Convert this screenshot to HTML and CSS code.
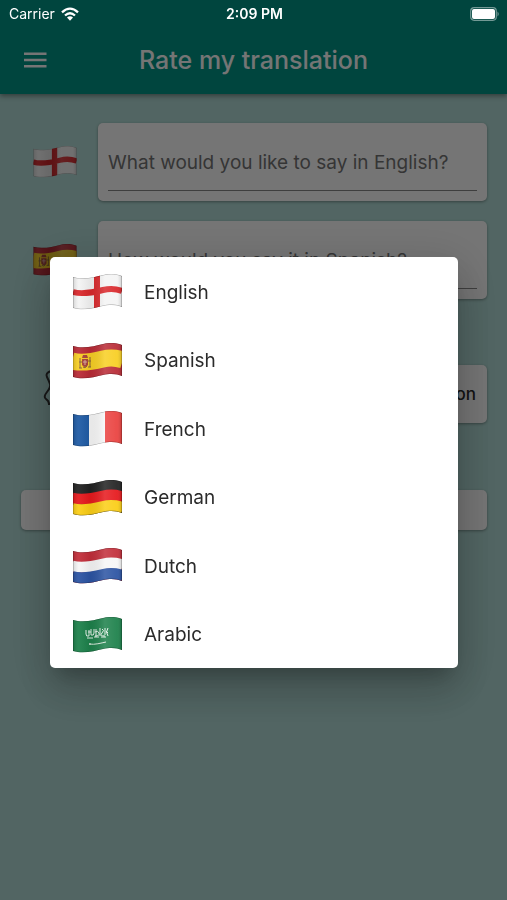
FILE: index.html
```html
<!DOCTYPE html>
<html lang="en">
<head>
    <meta charset="UTF-8">
    <meta name="viewport" content="width=device-width, initial-scale=1.0">
    <title>Rate my translation</title>
    <link rel="stylesheet" href="styles.css">
</head>
<body>
    <!-- Flags, shared by the form and the language dialog -->
    <svg class="defs" aria-hidden="true">
        <defs>
            <clipPath id="flagShape">
                <path d="M0 3c10 3 22 0 30-2s14-1 19 1v31c-5-2-11-3-19-1s-20 5-30 2z"/>
            </clipPath>
            <linearGradient id="flagShade">
                <stop offset="0" stop-color="#000" stop-opacity=".14"/>
                <stop offset=".12" stop-color="#fff" stop-opacity=".06"/>
                <stop offset=".35" stop-color="#000" stop-opacity=".06"/>
                <stop offset=".65" stop-color="#fff" stop-opacity=".14"/>
                <stop offset=".9" stop-color="#fff" stop-opacity=".06"/>
                <stop offset="1" stop-color="#000" stop-opacity=".18"/>
            </linearGradient>
            <g id="flagFinish">
                <path fill="url(#flagShade)" d="M0 0h49v36H0z"/>
                <path fill="none" stroke="#000" stroke-opacity=".3" d="M0 3c10 3 22 0 30-2s14-1 19 1v31c-5-2-11-3-19-1s-20 5-30 2z"/>
            </g>
            <symbol id="flag-en" viewBox="0 0 49 36">
                <g clip-path="url(#flagShape)" fill="none">
                    <path fill="#f4f4f4" d="M0 0h49v36H0z"/>
                    <path stroke="#d9282c" stroke-width="6" d="M0 18c10 3 22 0 30-2s14-1 19 1M24 0v36"/>
                    <use href="#flagFinish"/>
                </g>
            </symbol>
            <symbol id="flag-es" viewBox="0 0 49 36">
                <g clip-path="url(#flagShape)" fill="none">
                    <path fill="#b92b36" d="M0 0h49v36H0z"/>
                    <path stroke="#f8cf23" stroke-width="17" d="M-1 18c11 3 23 0 31-2s14-1 20 1"/>
                    <path fill="#a8443b" d="M9 16h6v6q-3 4-6 0zM10 12h4l1 3H9z"/>
                    <path stroke="#87613a" d="M7 15v10M17 14v10M6 25h3M15 24h3M6 19h3M15 18h3M10 24q2 2 4-1"/>
                    <path stroke="#d9a8a0" d="M12 17v5M10 19h4"/>
                    <use href="#flagFinish"/>
                </g>
            </symbol>
            <symbol id="flag-fr" viewBox="0 0 49 36">
                <g clip-path="url(#flagShape)">
                    <path fill="#f7f7f7" d="M0 0h49v36H0z"/>
                    <path fill="#1f5ba5" d="M0 0h16v36H0z"/>
                    <path fill="#ea4240" d="M32 0h17v36H32z"/>
                    <use href="#flagFinish"/>
                </g>
            </symbol>
            <symbol id="flag-de" viewBox="0 0 49 36">
                <g clip-path="url(#flagShape)" fill="none">
                    <path fill="#222" d="M0 0h49v36H0z"/>
                    <path stroke="#e6191d" stroke-width="11" d="M-1 18c11 3 23 0 31-2s14-1 20 1"/>
                    <path stroke="#fbce16" stroke-width="12" d="M-1 29c11 3 23 0 31-2s14-1 20 1"/>
                    <use href="#flagFinish"/>
                </g>
            </symbol>
            <symbol id="flag-nl" viewBox="0 0 49 36">
                <g clip-path="url(#flagShape)" fill="none">
                    <path fill="#c22e3a" d="M0 0h49v36H0z"/>
                    <path stroke="#f6f6f6" stroke-width="11" d="M-1 18c11 3 23 0 31-2s14-1 20 1"/>
                    <path stroke="#2c54a3" stroke-width="12" d="M-1 29c11 3 23 0 31-2s14-1 20 1"/>
                    <use href="#flagFinish"/>
                </g>
            </symbol>
            <symbol id="flag-sa" viewBox="0 0 49 36">
                <g clip-path="url(#flagShape)" fill="none">
                    <path fill="#1d814b" d="M0 0h49v36H0z"/>
                    <path stroke="#e4f1e8" stroke-width="1" d="M13 13v4q0 3 3 2v-6M14 21h6M18 12v6q3 1 3-2v-4M23 12v8M22 15q3-2 4 1t-4 3M27 11v8M29 12q3 1 0 4t3 3M32 11v7M35 11q-3 4 0 8M28 20h5M15 15h3M21 20h5M33 14l2 2"/>
                    <path stroke="#dcecdf" stroke-width="1" d="M16 27c6 1 12-1 17-2M17 26v2"/>
                    <use href="#flagFinish"/>
                </g>
            </symbol>
        </defs>
    </svg>

    <header class="app-bar">
        <button type="button" class="menu-button" aria-label="Menu">
            <svg viewBox="0 0 24 16" aria-hidden="true"><path d="M0 .5h22.5v2.4H0zM0 6.8h22.5v2.4H0zM0 13.1h22.5v2.4H0z"/></svg>
        </button>
        <h1>Rate my translation</h1>
    </header>

    <main class="page">
        <div class="row">
            <svg class="flag flag-small" aria-hidden="true"><use href="#flag-en"/></svg>
            <div class="card field">
                <input type="text" aria-label="English text" placeholder="What would you like to say in English?">
            </div>
        </div>
        <div class="row">
            <svg class="flag flag-small" aria-hidden="true"><use href="#flag-es"/></svg>
            <div class="card field">
                <input type="text" aria-label="Spanish text" placeholder="How would you say it in Spanish?">
            </div>
        </div>
        <div class="row actions">
            <svg class="scribble" viewBox="0 0 40 38" aria-hidden="true">
                <path d="M8 3q-6 2-4 6t3 7-3 8-1 7 3 5h8"/>
            </svg>
            <button type="button" class="card rate-button">Rate translation</button>
        </div>
        <div class="card result"></div>
    </main>

    <div class="backdrop">
        <div class="dialog" role="dialog" aria-modal="true" aria-label="Choose a language">
            <button type="button" class="option"><svg class="flag" aria-hidden="true"><use href="#flag-en"/></svg>English</button>
            <button type="button" class="option"><svg class="flag" aria-hidden="true"><use href="#flag-es"/></svg>Spanish</button>
            <button type="button" class="option"><svg class="flag" aria-hidden="true"><use href="#flag-fr"/></svg>French</button>
            <button type="button" class="option"><svg class="flag" aria-hidden="true"><use href="#flag-de"/></svg>German</button>
            <button type="button" class="option"><svg class="flag" aria-hidden="true"><use href="#flag-nl"/></svg>Dutch</button>
            <button type="button" class="option"><svg class="flag" aria-hidden="true"><use href="#flag-sa"/></svg>Arabic</button>
        </div>
    </div>

    <div class="status-bar">
        <span class="carrier">Carrier
            <svg class="wifi" viewBox="0 0 18 14" aria-hidden="true">
                <path fill="none" stroke="#fff" stroke-width="2.3" d="M1 5.3q8-7.4 16 0M4 8.5q5-4.4 10 0"/>
                <path fill="#fff" d="M6 10.5q3-2.4 6 0l-3 3.2z"/>
            </svg>
        </span>
        <span class="time">2:09 PM</span>
        <svg class="battery" viewBox="0 0 30 14" aria-hidden="true">
            <rect x=".7" y=".7" width="25.6" height="12.6" rx="3.5" fill="none" stroke="#fff" stroke-opacity=".45" stroke-width="1.2"/>
            <rect x="2" y="2" width="23" height="10" rx="2" fill="#fff"/>
            <path d="M27.5 4.5q2.5 2.5 0 5z" fill="#fff" fill-opacity=".45"/>
        </svg>
    </div>
</body>
</html>
```
FILE: styles.css
```css
* {
    box-sizing: border-box;
}

body {
    margin: 0;
    min-height: 100vh;
    background-color: #b2dcd7;
    font-family: Inter, "Liberation Sans", sans-serif;
    color: #2b2b2b;
}

button, input {
    font: inherit;
    color: inherit;
    border: none;
    background: none;
    padding: 0;
}

button {
    cursor: pointer;
}

.defs {
    position: absolute;
    width: 0;
    height: 0;
}

/* App bar */
.app-bar {
    display: grid;
    grid-template-columns: 48px 1fr 48px;
    align-items: center;
    height: 94px;
    padding: 26px 12px 0;
    background-color: #009688;
    color: #fff;
    box-shadow: 0 2px 5px rgba(0, 0, 0, 0.4);
}

.app-bar h1 {
    margin: 0;
    font-size: 25px;
    font-weight: 500;
    text-align: center;
}

.menu-button {
    display: flex;
    padding: 12px;
}

.menu-button svg {
    width: 24px;
    height: 16px;
    fill: #fff;
}

/* Form */
.page {
    display: flex;
    flex-direction: column;
    gap: 20px;
    padding: 29px 20px 20px 21px;
}

.row {
    display: flex;
    align-items: center;
    gap: 21px;
}

.card {
    background-color: #fff;
    border-radius: 5px;
    box-shadow: 0 1px 3px rgba(0, 0, 0, 0.35);
}

.field {
    flex: 1;
    padding: 10px;
}

.field input {
    display: block;
    width: 100%;
    height: 58px;
    padding-top: 2px;
    border-bottom: 1px solid #888;
    border-radius: 0;
    font-size: 19px;
}

.field input::placeholder {
    color: #757575;
    opacity: 1;
}

.flag {
    flex: none;
    width: 49px;
    height: 36px;
}

.flag-small {
    width: 44px;
    height: 32px;
    margin-left: 12px;
}

.actions {
    justify-content: space-between;
    margin-top: 46px;
}

.scribble {
    width: 40px;
    height: 38px;
    margin-left: 22px;
    margin-bottom: 14px;
    fill: none;
    stroke: #333;
    stroke-width: 2;
}

.rate-button {
    height: 58px;
    padding: 0 11px;
    font-size: 17px;
    font-weight: 500;
}

.result {
    height: 40px;
    margin-top: 47px;
}

/* Language dialog */
.backdrop {
    position: fixed;
    inset: 0;
    display: flex;
    align-items: center;
    justify-content: center;
    padding: 25px 49px 0 50px;
    background-color: rgba(0, 0, 0, 0.54);
}

.dialog {
    display: grid;
    grid-auto-rows: 1fr;
    width: 100%;
    max-width: 408px;
    min-height: 411px;
    background-color: #fff;
    border-radius: 5px;
    box-shadow: 0 14px 18px -8px rgba(0, 0, 0, 0.2),
        0 24px 40px 3px rgba(0, 0, 0, 0.14),
        0 9px 46px 8px rgba(0, 0, 0, 0.12);
}

.option {
    display: flex;
    align-items: center;
    gap: 22px;
    min-height: 68px;
    padding: 2px 23px 0;
    font-size: 19px;
    text-align: left;
}

/* Status bar */
.status-bar {
    position: fixed;
    top: 0;
    left: 0;
    right: 0;
    display: grid;
    grid-template-columns: 1fr auto 1fr;
    align-items: center;
    height: 27px;
    padding: 0 7px 0 9px;
    color: #fff;
    font-size: 14px;
}

.carrier {
    display: flex;
    align-items: center;
    gap: 6px;
}

.wifi {
    width: 18px;
    height: 14px;
}

.time {
    font-weight: 600;
}

.battery {
    justify-self: end;
    width: 30px;
    height: 14px;
}
```
